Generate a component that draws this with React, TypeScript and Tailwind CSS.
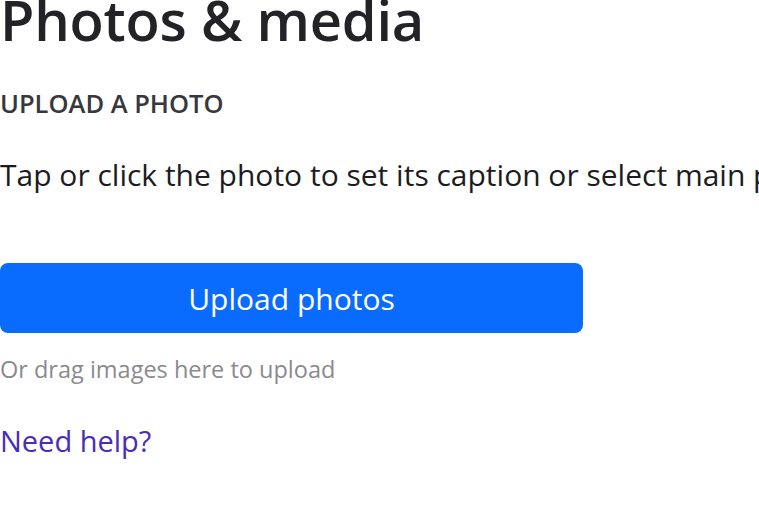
export default function App() {
  return (
    <div className="w-[759px] h-[522px] overflow-hidden bg-white font-['Open_Sans',sans-serif]">
      <div className="flex flex-col items-start -mt-[16px] w-[1100px]">
        <h1 className="text-[56px] leading-[70px] font-semibold text-[#232327] tracking-[-0.2px]">
          Photos &amp; media
        </h1>
        <h2 className="mt-[32px] text-[25.5px] leading-[34px] font-semibold text-[#38383c]">
          UPLOAD A PHOTO
        </h2>
        <p className="mt-[35px] text-[30px] leading-[40px] text-[#1c1c1f] whitespace-nowrap">
          Tap or click the photo to set its caption or select main photo
        </p>
        <button className="mt-[68px] w-[583px] h-[70px] rounded-[8px] bg-[#0a6bff] text-white text-[30px] flex items-center justify-center">
          Upload photos
        </button>
        <p className="mt-[20px] text-[23.5px] leading-[32px] text-[#8a8a8e]">
          Or drag images here to upload
        </p>
        <a className="mt-[36px] text-[29px] leading-[40px] text-[#4a2cb8]">Need help?</a>
      </div>
    </div>
  );
}
